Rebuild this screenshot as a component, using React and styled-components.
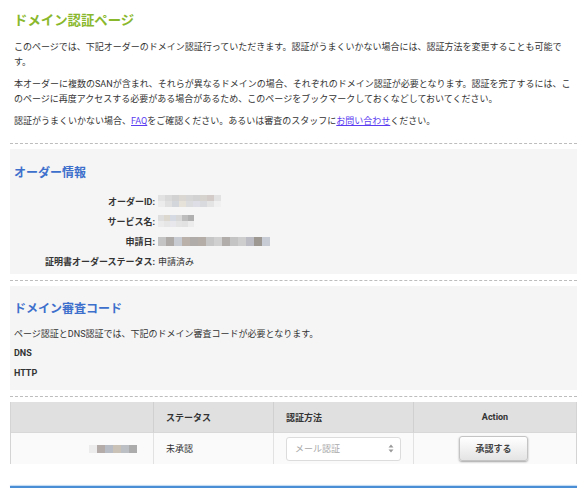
import React from 'react';
import styled, { createGlobalStyle } from 'styled-components';

const GlobalStyle = createGlobalStyle`
    html, body {
        margin: 0;
        padding: 0;
        background: #fff;
    }
    body {
        font-family: Roboto, "Noto Sans CJK JP", sans-serif;
        font-size: 9px;
        color: #333;
    }
`

const Page = styled.div`
    width: 567px;
    padding: 12px 0 0 10px;
`

const Intro = styled.div`
    padding: 0 5px 0 4px;
`

const Title = styled.h1`
    margin: 0 0 10px;
    font-size: 13.4px;
    line-height: 18px;
    font-weight: bold;
    color: #8ab82d;
`

const Para = styled.p`
    margin: 0 0 7px;
    line-height: 15px;
`

const Link = styled.a`
    color: #5b3cf0;
    text-decoration: underline;
`

const Divider = styled.div`
    border-top: 1px dashed #bdbdbd;
    margin: ${p => p.$top || 0}px 0 5px;
`

const Section = styled.div`
    background: #f5f5f5;
    padding: ${p => p.$pad || '16px 4px 3px'};
`

const Heading = styled.h2`
    margin: 0 0 10px;
    font-size: 12px;
    line-height: 16px;
    font-weight: bold;
    color: #3d6fcc;
`

const InfoRow = styled.div`
    display: grid;
    grid-template-columns: 144px 1fr;
    align-items: center;
    height: 20px;
`

const Label = styled.div`
    text-align: right;
    font-weight: bold;
    padding-right: 3px;
`

const Value = styled.div`
    display: flex;
    align-items: center;
`

const PixelGrid = styled.div`
    display: inline-flex;
    flex-direction: column;
`

const PixelRow = styled.div`
    display: flex;
`

const Pixel = styled.span`
    display: block;
    width: ${p => p.$w}px;
    height: ${p => p.$h}px;
`

const Pixelated = ({ rows, w = 7, h = 6 }) => (
    <PixelGrid>
        {rows.map((row, i) => (
            <PixelRow key={i}>
                {row.map((c, j) => <Pixel key={j} $w={w} $h={h} style={{ background: c }} />)}
            </PixelRow>
        ))}
    </PixelGrid>
)

const CodeText = styled.p`
    margin: 0 0 5px;
    line-height: 14px;
`

const CodeLabel = styled.div`
    font-weight: bold;
    line-height: 14px;
    margin-bottom: ${p => p.$last ? 0 : 6}px;
`

const Table = styled.div`
    display: grid;
    grid-template-columns: 142px 120px 140px 1fr;
    border-left: 1px solid #d4d4d4;
    border-right: 1px solid #d4d4d4;
`

const HeadCell = styled.div`
    background: #e0e0e0;
    height: 30px;
    display: flex;
    align-items: center;
    justify-content: ${p => p.$center ? 'center' : 'flex-start'};
    padding: 0 12px;
    font-weight: bold;
    font-size: 9px;
    border-left: ${p => p.$first ? 'none' : '1px solid #d0d0d0'};
    border-bottom: 1px solid #d8d8d8;
`

const BodyCell = styled.div`
    background: #fafafa;
    height: 31px;
    display: flex;
    align-items: center;
    justify-content: ${p => p.$align || 'flex-start'};
    padding: ${p => p.$pad || '0 12px'};
    border-left: ${p => p.$first ? 'none' : '1px solid #e2e2e2'};
`

const Select = styled.div`
    width: 116px;
    height: 24px;
    box-sizing: border-box;
    border: 1px solid #dcdcdc;
    border-radius: 3px;
    background: #fff;
    display: flex;
    align-items: center;
    justify-content: space-between;
    padding: 0 6px 0 8px;
    color: #a8a8a8;
`

const Button = styled.button`
    width: 69px;
    height: 25px;
    border: 1px solid #c4c4c4;
    border-radius: 3px;
    background: linear-gradient(#ffffff, #e4e4e4);
    box-shadow: 0 1px 2px rgba(0,0,0,0.35);
    font-family: Roboto, "Noto Sans CJK JP", sans-serif;
    font-size: 9px;
    font-weight: bold;
    color: #444;
    margin-right: 3px;
`

const Footer = styled.div`
    margin-top: 22px;
    height: 2px;
    background: #4a8ed6;
    box-shadow: 0 -1px 1px rgba(74,142,214,0.35);
`

const Arrows = () => (
    <svg width="6" height="9" viewBox="0 0 6 9">
        <path d="M3 0.5 L5.5 3.5 H0.5 Z" fill="#9a9a9a" />
        <path d="M3 8.5 L5.5 5.5 H0.5 Z" fill="#9a9a9a" />
    </svg>
)

const orderId = [
    ['#e2e2e2', '#d9d9d9', '#d2d2d2', '#dad6d2', '#d6d6d6', '#d2d2d2', '#d6d2ce', '#d2cbc7', '#e2e2e2'],
    ['#ececec', '#e0e0e0', '#d3d7dc', '#e6e2da', '#dadcde', '#dedee6', '#d8dade', '#e4e4e4', '#f0f0f0'],
]
const serviceName = [
    ['#dedede', '#dcd8d0', '#d6dae2', '#d8d8d8', '#bdbdbd', '#b0b0b0'],
    ['#ebebeb', '#e6e6e6', '#e8e8ec', '#e4e4e4', '#e2e2e2', '#ececec'],
]
const applyDate = [
    ['#c4c4c4', '#aeaaa8', '#c8ccd2', '#bab2aa', '#b0acaa', '#b4aca6', '#c6c6c6', '#d0d0d0', '#b0adab', '#c4c4c4', '#cecece', '#bcbcc4', '#9e9892', '#c8ccd4'],
]
const domainName = [
    ['#ececec', '#b4aca8', '#b8bcc4', '#cac2b6', '#bcc0c4', '#acacac'],
]

const App = () => {
    return (
        <Page>
            <GlobalStyle />
            <Intro>
                <Title>ドメイン認証ページ</Title>
                <Para>このページでは、下記オーダーのドメイン認証行っていただきます。認証がうまくいかない場合には、認証方法を変更することも可能です。</Para>
                <Para>本オーダーに複数のSANが含まれ、それらが異なるドメインの場合、それぞれのドメイン認証が必要となります。認証を完了するには、このページに再度アクセスする必要がある場合があるため、このページをブックマークしておくなどしておいてください。</Para>
                <Para>認証がうまくいかない場合、<Link href="#">FAQ</Link>をご確認ください。あるいは審査のスタッフに<Link href="#">お問い合わせ</Link>ください。</Para>
            </Intro>
            <Divider $top={14} />
            <Section>
                <Heading>オーダー情報</Heading>
                <InfoRow>
                    <Label>オーダーID:</Label>
                    <Value><Pixelated rows={orderId} /></Value>
                </InfoRow>
                <InfoRow>
                    <Label>サービス名:</Label>
                    <Value><Pixelated rows={serviceName} w={6} /></Value>
                </InfoRow>
                <InfoRow>
                    <Label>申請日:</Label>
                    <Value><Pixelated rows={applyDate} w={8} h={9} /></Value>
                </InfoRow>
                <InfoRow>
                    <Label>証明書オーダーステータス:</Label>
                    <Value>申請済み</Value>
                </InfoRow>
            </Section>
            <Divider $top={6} />
            <Section $pad="15px 4px 10px">
                <Heading>ドメイン審査コード</Heading>
                <CodeText>ページ認証とDNS認証では、下記のドメイン審査コードが必要となります。</CodeText>
                <CodeLabel>DNS</CodeLabel>
                <CodeLabel $last>HTTP</CodeLabel>
            </Section>
            <Divider $top={6} />
            <Table>
                <HeadCell $first />
                <HeadCell>ステータス</HeadCell>
                <HeadCell>認証方法</HeadCell>
                <HeadCell $center>Action</HeadCell>
                <BodyCell $first $align="flex-end" $pad="0 16px 0 0">
                    <Pixelated rows={domainName} w={8} h={8} />
                </BodyCell>
                <BodyCell>未承認</BodyCell>
                <BodyCell>
                    <Select>
                        <span>メール認証</span>
                        <Arrows />
                    </Select>
                </BodyCell>
                <BodyCell $align="center">
                    <Button>承認する</Button>
                </BodyCell>
            </Table>
            <Footer />
        </Page>
    )
}

export default App
